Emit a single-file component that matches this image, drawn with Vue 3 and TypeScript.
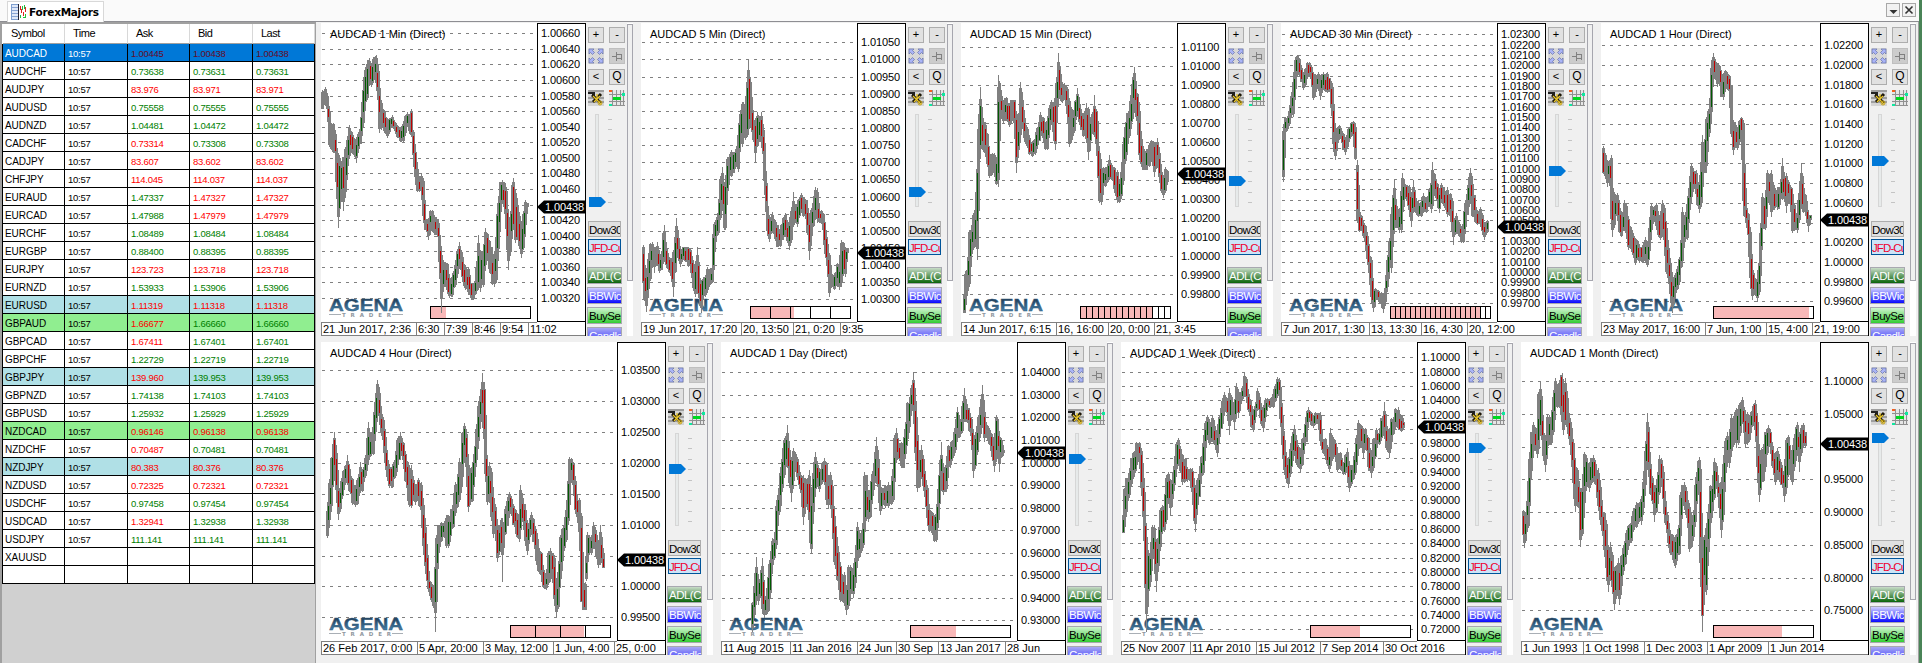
<script setup lang="ts">
interface Quote {
  symbol: string
  time: string
  prices: string[]
  // one letter per price: r = down, g = up
  dir: string
  mark?: string
}
interface Chart {
  title: string
  wide?: boolean
  last?: boolean
  // first price, step, count, y of the first and of the last label
  scale: [number, number, number, number, number]
  tag: number
  times: [number, string][]
  level: number
  session: { width: number, fill: number, cell?: number }
  // x, high, low
  track: number[]
}

function q(symbol: string, ask: string, bid: string, last: string, dir: string, mark = ''): Quote {
  return { symbol, time: ask ? '10:57' : '', prices: [ask, bid, last], dir, mark }
}

const quotes: Quote[] = [
  q('AUDCAD', '1.00445', '1.00438', '1.00438', 'rrr', 'selected'),
  q('AUDCHF', '0.73638', '0.73631', '0.73631', 'ggg'),
  q('AUDJPY', '83.976', '83.971', '83.971', 'rrr'),
  q('AUDUSD', '0.75558', '0.75555', '0.75555', 'ggg'),
  q('AUDNZD', '1.04481', '1.04472', '1.04472', 'ggg'),
  q('CADCHF', '0.73314', '0.73308', '0.73308', 'rgg'),
  q('CADJPY', '83.607', '83.602', '83.602', 'rrr'),
  q('CHFJPY', '114.045', '114.037', '114.037', 'rrr'),
  q('EURAUD', '1.47337', '1.47327', '1.47327', 'grr'),
  q('EURCAD', '1.47988', '1.47979', '1.47979', 'grr'),
  q('EURCHF', '1.08489', '1.08484', '1.08484', 'ggg'),
  q('EURGBP', '0.88400', '0.88395', '0.88395', 'ggg'),
  q('EURJPY', '123.723', '123.718', '123.718', 'rrr'),
  q('EURNZD', '1.53933', '1.53906', '1.53906', 'ggg'),
  q('EURUSD', '1.11319', '1.11318', '1.11318', 'rrr', 'blue'),
  q('GBPAUD', '1.66677', '1.66660', '1.66660', 'rgg', 'green'),
  q('GBPCAD', '1.67411', '1.67401', '1.67401', 'rgg'),
  q('GBPCHF', '1.22729', '1.22719', '1.22719', 'ggg'),
  q('GBPJPY', '139.960', '139.953', '139.953', 'rgg', 'blue'),
  q('GBPNZD', '1.74138', '1.74103', '1.74103', 'ggg'),
  q('GBPUSD', '1.25932', '1.25929', '1.25929', 'ggg'),
  q('NZDCAD', '0.96146', '0.96138', '0.96138', 'rrr', 'green'),
  q('NZDCHF', '0.70487', '0.70481', '0.70481', 'rgg'),
  q('NZDJPY', '80.383', '80.376', '80.376', 'rrr', 'blue'),
  q('NZDUSD', '0.72325', '0.72321', '0.72321', 'rrr'),
  q('USDCHF', '0.97458', '0.97454', '0.97454', 'ggg'),
  q('USDCAD', '1.32941', '1.32938', '1.32938', 'rgg'),
  q('USDJPY', '111.141', '111.141', '111.141', 'ggg'),
  q('XAUUSD', '', '', '', ''),
  q('', '', '', '', ''),
]

// coordinates are kept in thirds of a pixel
const top: Chart[] = [
  {
    title: 'AUDCAD 1 Min (Direct)', scale: [1.0066, 0.0002, 18, 31, 825], tag: 552, level: 8,
    times: [[0, '21 Jun 2017, 2:36'], [286, '6:30'], [370, '7:39'], [454, '8:46'], [538, '9:54'], [622, '11:02']],
    session: { width: 100, fill: 15 },
    track: [37,270,328,46,260,305,52,285,330,58,330,440,62,370,450,68,370,460,74,400,465,78,440,560,83,460,685,90,480,620,96,470,570,100,470,632,106,440,590,112,420,505,118,375,470,124,395,460,130,410,465,138,420,490,145,395,450,152,350,410,160,255,380,166,200,315,172,180,300,178,175,250,184,200,260,190,170,250,197,165,250,203,210,300,208,280,400,215,325,380,222,330,400,230,355,415,238,355,400,246,345,375,254,365,395,262,375,415,270,380,425,278,370,425,284,345,400,290,335,375,297,350,400,304,328,410,308,390,470,314,450,540,320,500,575,326,540,575,332,520,570,338,535,655,346,655,690,354,655,720,360,630,690,366,630,695,372,645,705,378,650,705,384,670,715,388,700,790,393,760,940,398,780,870,404,785,860,410,790,880,418,830,895,426,825,890,434,790,860,440,750,825,446,725,800,454,750,820,460,790,850,466,795,870,474,800,885,482,850,900,490,850,900,498,800,880,504,705,860,510,750,875,518,750,860,524,685,800,530,700,770,538,720,820,546,760,855,553,780,862,558,700,850,564,590,750,570,545,640,576,540,600,582,545,630,588,560,690,594,650,810,600,650,760,606,550,700,610,535,690,616,570,730,622,610,720,628,640,740,634,670,775,640,640,750,646,600,680,652,610,620],
  },
  {
    title: 'AUDCAD 5 Min (Direct)', scale: [1.0105, 0.0005, 16, 58, 829], tag: 690, level: 7,
    times: [[0, '19 Jun 2017, 17:20'], [301, '20, 13:50'], [457, '21, 0:20'], [596, '9:35']],
    session: { width: 100, fill: 43, cell: 20 },
    track: [38,735,850,42,790,900,48,820,935,54,770,875,60,730,840,66,725,790,72,750,820,80,725,790,86,765,820,92,760,810,98,700,790,102,675,780,108,740,800,116,770,820,124,775,830,130,750,890,137,655,775,143,705,780,150,750,800,158,740,780,166,740,785,174,740,800,180,745,800,186,770,840,194,790,890,200,740,870,206,830,900,212,850,940,218,830,890,226,830,890,232,800,880,240,805,855,246,800,850,250,690,820,256,660,730,264,630,700,270,530,660,275,500,620,281,590,690,286,550,690,291,470,580,297,470,530,303,450,530,310,460,520,318,440,500,325,400,515,330,330,440,336,305,440,344,305,420,350,230,410,355,180,400,360,240,380,366,325,400,374,370,490,380,335,440,386,350,420,392,335,430,398,380,470,403,455,550,408,540,640,412,610,700,418,650,725,426,635,690,434,660,720,442,675,740,450,690,740,458,650,720,464,640,700,470,660,730,478,670,750,484,620,730,488,575,680,494,620,670,500,605,680,508,590,650,514,580,640,520,590,650,528,600,660,536,640,780,542,630,710,548,600,680,555,560,660,560,565,670,566,630,670,574,630,670,580,640,690,586,680,770,592,730,800,598,760,890,604,820,860,612,825,870,620,790,860,628,790,870,634,720,860,640,725,820,646,740,830,652,745,760],
  },
  {
    title: 'AUDCAD 15 Min (Direct)', scale: [1.011, 0.001, 14, 73, 814], tag: 452, level: 6,
    times: [[0, '14 Jun 2017, 6:15'], [286, '16, 16:00'], [442, '20, 0:00'], [580, '21, 3:45']],
    session: { width: 90, fill: 72, cell: 6 },
    track: [41,880,940,46,820,900,52,800,880,58,690,860,64,690,770,70,640,750,75,620,740,80,480,780,85,380,500,91,262,460,97,350,450,104,370,470,110,400,500,118,460,535,126,460,520,132,460,520,139,470,555,143,225,560,148,250,345,154,285,350,160,300,370,168,290,360,176,310,380,184,300,370,191,300,370,198,340,520,204,370,460,211,245,410,217,300,380,222,350,420,230,380,440,238,410,465,246,430,470,254,410,465,262,380,440,270,335,410,278,350,420,284,370,450,292,350,450,298,320,400,304,300,370,311,310,430,316,290,450,321,220,330,325,160,280,331,220,300,337,245,310,343,250,300,350,260,350,358,300,440,365,330,410,372,330,400,380,265,350,386,310,370,394,340,390,400,340,410,408,310,420,414,320,480,420,360,430,426,340,400,433,285,410,440,360,470,446,440,610,452,500,615,458,500,560,466,500,560,472,500,550,478,465,540,484,490,540,492,500,570,500,510,610,506,540,610,512,510,590,518,430,550,524,370,490,532,340,440,540,300,390,546,250,360,551,200,330,556,250,350,562,280,370,568,330,480,574,410,500,580,445,510,588,450,510,596,430,500,604,420,480,612,425,530,620,415,490,628,450,530,634,510,580,640,540,595,646,500,580,652,510,550],
  },
  {
    title: 'AUDCAD 30 Min (Direct)', scale: [1.023, 0.001, 27, 34, 840], tag: 612, level: 5,
    times: [[0, '7 Jun 2017, 1:30'], [265, '13, 13:30'], [421, '16, 4:30'], [559, '20, 12:00']],
    session: { width: 100, fill: 90, cell: 5 },
    track: [40,380,545,46,350,400,52,350,390,58,330,375,64,290,350,70,240,350,75,170,280,80,165,210,86,175,230,92,200,245,98,220,270,104,205,260,110,185,225,118,185,230,124,200,240,130,220,300,136,225,280,144,215,260,150,225,300,158,215,270,166,225,275,172,215,280,180,240,275,186,250,360,190,300,450,195,400,480,200,380,430,206,375,410,214,390,420,220,400,450,226,410,465,234,385,430,242,365,410,250,362,410,256,370,480,260,480,670,266,635,695,272,645,690,278,665,710,286,675,730,292,700,780,298,765,825,304,770,900,309,870,935,316,865,900,324,870,900,332,875,915,339,890,940,346,860,910,352,770,870,358,720,810,363,640,820,368,570,720,372,540,700,378,610,680,386,640,700,394,570,700,397,520,650,403,550,600,410,555,610,418,555,640,424,590,680,430,540,625,436,590,640,444,610,650,452,600,650,460,580,640,468,600,640,476,565,620,482,550,640,487,485,610,494,530,580,500,550,610,508,570,640,514,550,610,522,570,620,530,560,650,540,580,650,546,600,700,550,660,735,558,640,690,566,665,710,574,680,730,580,670,730,586,600,690,594,545,630,601,505,600,607,550,650,614,620,670,622,630,675,630,620,670,636,640,700,642,670,720,650,660,700],
  },
  {
    title: 'AUDCAD 1 Hour (Direct)', last: true, scale: [1.022, 0.002, 14, 67, 835], tag: 591, level: 4,
    times: [[0, '23 May 2017, 16:00'], [313, '7 Jun, 1:00'], [496, '15, 4:00'], [634, '21, 19:00']],
    session: { width: 100, fill: 95 },
    track: [38,438,520,44,460,530,50,490,560,58,480,540,64,465,680,67,560,710,74,590,650,80,580,640,88,620,700,94,640,710,102,600,680,108,610,710,114,650,750,122,680,750,128,700,770,134,715,795,140,720,770,148,740,790,156,740,790,164,710,790,170,740,800,176,680,760,182,610,700,190,620,660,197,610,680,204,640,710,210,650,720,216,600,710,222,620,730,228,670,820,234,740,840,240,780,890,246,820,940,252,840,900,260,800,870,268,770,850,276,620,800,280,640,760,286,650,720,292,600,720,298,560,640,304,490,600,310,510,560,318,510,590,326,540,640,332,470,620,337,405,540,342,450,520,348,350,520,354,330,420,360,290,380,364,190,350,370,160,230,376,185,240,382,190,260,388,195,250,394,220,290,398,220,300,404,210,270,412,215,270,418,225,280,424,255,410,428,360,465,434,370,440,442,380,450,448,360,430,454,352,400,460,360,620,463,480,650,468,620,670,474,640,710,480,680,850,485,800,900,492,830,880,500,830,905,506,780,880,511,690,810,517,580,700,524,600,690,530,510,620,536,525,590,544,510,650,552,560,630,560,560,630,568,560,620,576,475,600,582,540,600,588,520,640,594,540,600,602,560,640,607,590,700,614,640,690,622,640,700,628,570,660,634,490,620,640,560,640,648,600,650,654,640,695,660,645,660],
  },
]

const bottom: Chart[] = [
  {
    title: 'AUDCAD 4 Hour (Direct)', wide: true, scale: [1.035, 0.005, 9, 85, 826], tag: 654, level: 3,
    times: [[0, '26 Feb 2017, 0:00'], [289, '5 Apr, 20:00'], [487, '3 May, 12:00'], [697, '1 Jun, 4:00'], [880, '25, 0:00']],
    session: { width: 100, fill: 73, cell: 25 },
    track: [52,520,610,58,440,560,63,370,520,68,320,440,73,290,430,78,350,480,84,460,555,90,450,530,96,420,490,104,390,450,110,360,450,118,400,470,126,430,510,134,450,515,142,430,510,150,380,470,156,410,470,164,370,430,170,310,400,175,260,370,180,310,365,188,270,360,194,190,300,200,135,240,206,170,250,212,230,290,218,250,320,224,300,390,230,370,430,238,390,460,246,390,460,254,370,430,262,310,400,270,290,350,278,320,380,286,350,440,294,380,510,302,390,520,308,430,490,316,450,510,324,430,500,332,440,530,338,500,640,344,570,700,350,650,750,356,735,770,364,740,800,370,750,820,374,690,890,379,600,740,384,570,660,392,560,620,400,565,600,408,540,640,414,540,640,420,550,610,428,500,580,434,440,540,440,450,520,446,370,500,452,380,460,456,290,440,462,265,370,468,290,400,474,380,530,480,400,510,486,390,500,492,350,430,498,280,380,504,210,320,510,170,270,516,115,230,521,140,330,526,310,430,532,400,510,538,380,490,544,400,550,550,480,610,556,510,590,562,570,680,568,570,660,574,550,640,577,550,740,580,560,640,584,520,600,590,490,570,596,470,540,602,490,540,610,510,570,618,530,600,626,530,620,631,450,580,637,490,560,644,520,630,650,560,660,658,560,610,664,530,600,670,550,620,678,590,690,684,640,710,692,650,730,700,700,760,708,720,765,714,650,750,720,640,740,726,655,720,732,660,810,737,770,850,743,700,820,750,600,740,756,580,680,762,560,640,768,520,620,773,430,560,778,365,480,784,370,420,790,385,450,796,430,530,802,490,550,808,490,600,814,540,800,819,740,825,824,740,825,830,590,690,836,600,650,842,610,660,850,560,640,857,600,670,863,620,700,869,570,690,875,640,680,880,660,700],
  },
  {
    title: 'AUDCAD 1 Day (Direct)', wide: true, scale: [1.04, 0.01, 12, 91, 835], tag: 332, level: 2,
    times: [[0, '11 Aug 2015'], [208, '11 Jan 2016'], [409, '24 Jun'], [526, '30 Sep'], [652, '13 Jan 2017'], [853, '28 Jun']],
    session: { width: 100, fill: 45 },
    track: [127,800,890,131,740,850,137,665,800,143,730,810,150,730,790,155,670,830,161,780,850,168,780,840,174,720,830,180,660,780,186,610,700,192,610,670,198,510,640,204,470,550,210,410,520,216,360,460,221,310,420,226,330,400,232,270,380,237,340,450,243,380,500,249,340,440,254,350,400,260,370,430,266,410,450,272,420,480,278,420,570,284,430,510,290,430,520,296,405,560,300,460,640,304,500,655,309,400,540,315,350,470,321,380,450,328,400,470,336,380,440,342,370,430,348,380,510,354,430,520,361,410,510,367,450,560,373,530,690,379,600,710,385,640,750,391,690,800,397,720,800,403,710,810,408,770,840,414,690,820,420,690,770,428,690,790,434,660,750,440,560,680,446,590,670,452,590,650,458,560,640,462,410,600,467,420,550,473,480,560,479,460,550,485,410,490,491,380,450,498,305,440,504,370,460,510,450,540,518,460,510,526,450,520,534,440,520,542,450,510,548,390,500,553,300,420,558,280,380,564,320,370,572,320,400,580,340,400,586,270,370,592,200,320,598,200,280,604,155,230,610,112,220,615,190,360,620,300,470,626,360,460,632,330,430,638,370,460,645,430,490,652,450,560,658,520,590,665,530,600,672,540,620,679,530,620,684,460,560,690,370,480,694,320,440,700,400,480,708,380,470,714,330,400,720,330,400,728,310,370,734,270,350,742,215,310,748,260,310,756,210,290,763,160,240,769,200,260,776,230,290,784,250,310,790,300,430,796,290,400,803,240,330,810,210,300,816,150,270,822,230,320,830,270,310,838,280,330,846,300,370,853,330,410,858,240,380,862,245,340,868,300,410,874,310,370,880,345,355],
  },
  {
    title: 'AUDCAD 1 Week (Direct)', wide: true, scale: [1.1, 0.02, 20, 46, 862], tag: 254, level: 1,
    times: [[0, '25 Nov 2007'], [208, '11 Apr 2010'], [406, '15 Jul 2012'], [598, '7 Sep 2014'], [786, '30 Oct 2016']],
    session: { width: 100, fill: 49 },
    track: [38,540,595,43,460,570,49,430,530,56,410,480,63,370,450,70,350,430,78,320,400,86,320,370,92,340,460,98,430,550,103,500,620,108,580,890,114,650,780,120,650,750,126,570,680,131,570,670,137,620,770,143,600,700,149,520,640,156,510,590,163,510,590,168,420,560,173,410,490,179,440,540,186,430,500,192,390,450,199,320,410,205,310,390,211,340,410,217,360,450,224,370,440,232,400,440,240,400,440,247,400,480,252,440,560,256,480,590,262,430,520,270,390,450,278,320,420,284,260,340,291,240,310,298,260,330,305,240,320,312,270,330,322,280,365,328,240,310,335,190,270,342,170,230,350,190,240,357,160,300,364,180,240,371,210,285,377,145,230,384,180,250,391,170,210,398,150,190,403,115,170,409,130,190,415,170,230,422,210,280,428,230,290,434,210,250,442,160,210,447,180,230,453,210,270,460,230,290,466,190,250,472,190,220,480,190,220,488,175,220,494,150,200,500,125,190,506,130,180,511,160,260,517,240,340,523,310,410,529,360,440,534,370,460,540,340,420,546,300,380,552,270,350,558,310,390,564,330,400,570,350,410,576,310,390,582,290,340,588,240,320,594,215,260,602,230,270,608,240,280,616,230,270,624,235,270,630,230,320,636,310,350,644,310,370,650,330,390,656,350,410,661,280,400,668,310,360,676,320,370,682,350,410,690,350,400,698,380,420,706,360,420,712,340,410,718,380,470,724,390,450,732,360,430,739,310,400,745,255,350,752,270,330,760,280,370,766,280,340,774,310,400,782,360,430,790,310,400,798,280,340,806,290,330,814,250,310,822,200,300,828,270,340,836,290,370,842,250,320,848,250,300,856,220,280,864,215,285,872,240,290,878,260,280],
  },
  {
    title: 'AUDCAD 1 Month (Direct)', wide: true, last: true, scale: [1.1, 0.05, 8, 118, 805], tag: 306, level: 0,
    times: [[0, '1 Jun 1993'], [187, '1 Oct 1998'], [370, '1 Dec 2003'], [559, '1 Apr 2009'], [742, '1 Jun 2014']],
    session: { width: 100, fill: 68 },
    track: [38,525,600,42,560,640,48,530,600,53,430,580,58,370,480,63,290,410,68,260,350,74,280,340,80,280,370,85,170,330,89,140,290,94,180,310,100,290,370,106,310,410,112,240,340,118,240,330,124,260,330,130,180,300,136,130,210,142,150,220,149,130,220,155,115,270,160,160,300,166,130,270,171,180,280,178,240,320,184,280,370,189,320,460,194,380,530,200,400,500,205,450,520,209,460,635,216,440,600,222,350,520,228,360,450,236,380,470,243,370,450,250,360,440,256,380,450,263,400,520,270,450,560,275,530,590,281,530,650,287,560,710,293,650,770,299,620,720,305,650,760,311,700,825,317,690,790,323,670,760,328,690,810,334,660,760,340,630,720,347,590,670,355,570,640,362,560,620,370,520,590,378,500,580,386,500,560,394,490,570,400,440,520,405,340,460,410,235,390,415,300,400,421,380,480,428,440,510,433,460,560,440,430,510,446,360,480,453,370,440,459,410,500,466,490,570,474,560,630,481,590,660,488,600,680,494,600,700,500,590,670,506,560,660,511,470,590,517,450,520,523,440,510,529,460,550,536,510,650,542,560,640,548,530,610,554,450,570,560,400,490,566,365,440,570,400,700,575,600,890,581,600,770,587,570,780,593,520,650,599,450,580,605,450,530,611,370,490,617,390,450,624,440,490,629,440,560,634,450,610,640,380,550,645,310,420,651,290,370,658,300,400,664,240,350,671,230,330,677,220,340,683,210,330,689,200,300,695,185,250,701,220,300,706,240,340,712,230,330,718,240,320,724,230,280,730,210,270,736,195,290,741,250,400,746,370,500,752,340,450,759,340,440,766,290,400,773,270,330,780,290,340,787,330,400,794,350,450,800,340,430,807,370,440,814,390,450,822,410,500,828,310,460,834,300,380,840,340,430,846,360,450,852,300,400,858,270,370,862,260,340,868,300,410,874,270,360,880,265,330,884,290,340],
  },
]

function noise(n: number) {
  const v = Math.sin(n * 12.9898) * 43758.5453
  return v - Math.floor(v)
}

// every known bar is kept, gaps wider than two pixels get one more in between
function fillGaps(track: number[]) {
  const result: number[][] = []
  for (let i = 0; i < track.length; i += 3) {
    const cur = track.slice(i, i + 3)
    const prev = result[result.length - 1]
    if (prev && cur[0] - prev[0] > 4) {
      const k = 0.35 + 0.3 * noise(cur[0])
      const pad = (cur[2] - cur[1]) * 0.12
      result.push([
        (prev[0] + cur[0]) / 2,
        prev[1] + (cur[1] - prev[1]) * k + pad * noise(i),
        prev[2] + (cur[2] - prev[2]) * k - pad * noise(i + 1),
      ])
    }
    result.push(cur)
  }
  return result
}

function bars(c: Chart) {
  const oy = c.wide ? 21 : 69
  let grey = '', up = '', down = ''
  const list = fillGaps(c.track)
  let lastColored = -9
  list.forEach(([x, a, b], i) => {
    const next = list[i + 1] || list[i]
    const prev = list[i - 1] || list[i]
    const px = Math.round((x - 33) / 3)
    const y1 = Math.round((a - oy) / 3)
    const y2 = Math.max(y1 + 1, Math.round((b - oy) / 3))
    const size = y2 - y1
    // a long spike beyond both neighbours is only a wick
    const over = Math.max(0, Math.min(prev[1], next[1]) - a) / 3
    const under = Math.max(0, b - Math.max(prev[2], next[2])) / 3
    const b1 = Math.round(y1 + Math.min(size * 0.4, Math.max(over * 0.75, size * 0.12 * noise(x))))
    const b2 = Math.round(y2 - Math.min(size * 0.65, Math.max(under * 0.8, size * 0.12 * noise(x * 2))))
    grey += `M${px} ${y1}h1V${y2}h-1z`
    grey += `M${px - 1} ${b1}h3V${b2}h-3z`
    const move = next[1] + next[2] - prev[1] - prev[2]
    const chance = Math.abs(move) > 60 ? 0.85 : 0.5
    if (b2 - b1 > 4 && px - lastColored > 1 && noise(x * 3) < chance) {
      const c1 = b1 + 1 + Math.floor((b2 - b1) * 0.3 * noise(x * 5))
      const c2 = b2 - 1 - Math.floor((b2 - b1) * 0.35 * noise(x * 7))
      const d = `M${px} ${c1}h1V${c2}h-1z`
      if (move < 0) up += d
      else down += d
      lastColored = px
    }
  })
  return { grey, up, down }
}

function build(c: Chart) {
  const w = (c.wide ? 296 : 216) + (c.last ? 3 : 0)
  const [from, step, count, y0, y1] = c.scale
  const tagY = Math.round(c.tag / 3)
  const levels = []
  for (let i = 0; i < count; i++) {
    levels.push({
      y: Math.round((y0 + (y1 - y0) * i / (count - 1)) / 3),
      text: (from - step * i).toFixed(5),
    })
  }
  const cells = []
  if (c.session.cell) {
    for (let x = c.session.cell; x < c.session.width; x += c.session.cell) cells.push(x)
  }
  const times = c.times.map(t => ({ x: Math.round(t[0] / 3), text: t[1] }))
  // the price tag replaces the label it would sit on
  const labels = levels.filter(l => Math.abs(l.y - tagY) > 4)
  return { ...c, w, levels, labels, cells, times, tagY, bars: bars(c) }
}

const rows = [top.map(build), bottom.map(build)]
const ticks = [96, 106, 117, 127, 138, 148, 158, 169, 179]
const studies = [
  { text: 'ADL(C', cls: 'adl' },
  { text: 'BBWic', cls: 'bbw' },
  { text: 'BuySe', cls: 'buy' },
  { text: 'Candle', cls: 'candle' },
]
</script>

<template>
  <div class="window">
    <header class="tabs">
      <div class="tab">
        <svg width="16" height="16" shape-rendering="crispEdges">
          <rect width="16" height="16" fill="#7f9fd0" />
          <rect x="1" y="1" width="6" height="14" fill="#dfe8f8" />
          <path d="M1 3.500h6M1 6.500h6M1 9.500h6M1 12.500h6" stroke="#88a4d4" />
          <rect x="8" y="0" width="8" height="16" fill="#fff" />
          <path d="M7.500 0V16" stroke="#223" />
          <path d="M9.500 2v4M10.500 5v4M12.500 8v4M14.500 3v5" stroke="#e02020" />
          <path d="M9.500 11v3M11.500 2v4M13.500 1v4M14.500 10v4M11.500 13h2" stroke="#20c040" />
        </svg>
        <span>ForexMajors</span>
      </div>
      <div class="tab-actions">
        <svg width="14" height="14" class="action"><path d="M2.500 6h8l-4 4z" fill="#333" /></svg>
        <svg width="14" height="14" class="action"><path d="M2.500 2.500l7 7M9.500 2.500l-7 7" stroke="#333" stroke-width="1.600" /></svg>
      </div>
    </header>
    <main class="content">
      <aside class="quotes">
        <div class="row head">
          <span>Symbol</span><span>Time</span><span>Ask</span><span>Bid</span><span>Last</span>
        </div>
        <div v-for="(item, i) in quotes" :key="i" class="row" :class="item.mark">
          <span class="symbol">{{ item.symbol }}</span>
          <span>{{ item.time }}</span>
          <span v-for="(p, k) in item.prices" :key="k" :class="item.dir[k] === 'r' ? 'down' : 'up'">{{ p }}</span>
        </div>
      </aside>
      <section class="charts">
        <div v-for="(row, r) in rows" :key="r" class="chart-row">
          <article v-for="c in row" :key="c.title" class="panel">
            <svg class="plot" :width="c.w + 49" height="313" shape-rendering="crispEdges">
              <defs>
                <linearGradient id="steel" x1="0" y1="0" x2="0" y2="1">
                  <stop offset="0.2" stop-color="#24425e" />
                  <stop offset="0.8" stop-color="#4580aa" />
                </linearGradient>
              </defs>
              <rect :width="c.w + 49" height="313" fill="#fff" />
              <path
                v-for="l in c.levels" :key="l.text" :d="`M1 ${l.y + 0.5}H${c.w - 4}`"
                stroke="#808080" stroke-dasharray="3 5"
              />
              <text x="9" y="15">{{ c.title }}</text>
              <g>
                <text x="8" y="288" class="brand" textLength="74" lengthAdjust="spacingAndGlyphs">AGENA</text>
                <path d="M8 291.500h12M71 291.500h11" stroke="#a9afb5" />
                <text x="21" y="294" class="sub" textLength="49">TRADER</text>
              </g>
              <g :transform="`translate(${c.w - 6 - c.session.width} 283)`">
                <rect :width="c.session.width" height="12" fill="#fff" />
                <rect y="1" :width="c.session.fill" height="11" fill="#f8b8b8" />
                <path v-for="x in c.cells" :key="x" :d="`M${x - 0.5} 0V12`" stroke="#000" />
                <rect x="-0.500" y="0.500" :width="c.session.width" height="12" fill="none" stroke="#000" />
              </g>
              <path :d="c.bars.grey" fill="#808080" />
              <path :d="c.bars.up" fill="#005a00" />
              <path :d="c.bars.down" fill="#c00000" />

              <rect :x="c.w + 0.5" y="0.500" width="48" height="298" fill="#fff" stroke="#000" />
              <text v-for="l in c.labels" :key="l.text" :x="c.w + 4" :y="l.y + 4" class="price">{{ l.text }}</text>
              <path
                :d="`M${c.w} ${c.tagY}l7 -6.500h42v13h-42z`"
                fill="#000" shape-rendering="auto"
              />
              <text :x="c.w + 8" :y="c.tagY + 4" class="price tag">1.00438</text>

              <path :d="`M0.500 299V312.500H${c.w + 49}M0 299.500H${c.w}`" fill="none" stroke="#808080" />
              <path :d="`M${c.w + 48.5} 299V313`" stroke="#000" />
              <g v-for="t in c.times" :key="t.text">
                <path :d="`M${t.x + 0.5} 299V312`" stroke="#808080" />
                <text :x="t.x + 2" y="310">{{ t.text }}</text>
              </g>
            </svg>
            <div class="tools">
              <div class="grid">
                <span class="btn">+</span>
                <span class="btn">-</span>
                <svg class="btn flat" width="16" height="16">
                  <rect width="16" height="16" fill="#d8d8d8" />
                  <path d="M1 1h5l-1.500 1.500 2 2-2 2-2-2L1 6zM15 1h-5l1.500 1.500-2 2 2 2 2-2L15 6zM1 15h5l-1.500-1.500 2-2-2-2-2 2L1 10zM15 15h-5l1.500-1.500-2-2 2-2 2 2L15 10z" fill="#aab4f6" stroke="#6670a8" stroke-width=".7" />
                </svg>
                <svg class="btn off" width="16" height="16" shape-rendering="crispEdges">
                  <path d="M2 7.500h5M6.500 3v9M7 5.500h4v4h-4M11.500 5v6" fill="none" stroke="#808080" />
                </svg>
                <span class="btn">&lt;</span>
                <span class="btn big">Q</span>
                <svg class="btn flat" width="16" height="16">
                  <rect width="16" height="16" fill="#d4d4d4" />
                  <path d="M0 1h16M0 8h16M0 12h16" stroke="#8c8c8c" stroke-width="1.500" />
                  <path d="M0 2h7v4h-3v-2h-4z" fill="#222" />
                  <path d="M4 5l9 8M13 4l-8 8" stroke="#1c1608" stroke-width="3" />
                  <path d="M5 6l8 8M9 4v6M6 12l6-6" stroke="#e8c628" stroke-width="1.300" />
                  <circle cx="12" cy="13" r="2" fill="none" stroke="#c8a418" />
                </svg>
                <svg class="btn flat" width="16" height="16" shape-rendering="crispEdges">
                  <rect width="16" height="16" fill="#e6e6e6" />
                  <path d="M3.500 0V16M7.500 0V16M11.500 0V16M14.500 0V16M0 4.500H16M0 11.500H16M0 15.500H16" stroke="#909090" />
                  <rect x="4" y="7" width="8" height="3" fill="#00d820" />
                  <rect width="3" height="2" fill="#f46020" />
                  <rect x="13" y="3" width="3" height="3" fill="#10e8a0" />
                  <rect y="14" width="3" height="2" fill="#10e8a0" />
                </svg>
              </div>
              <svg class="slider" width="36" height="115" shape-rendering="crispEdges">
                <rect x="9.500" y="8.500" width="3" height="92" fill="#e7eaea" stroke="#d6d6d6" />
                <path v-for="t in ticks" :key="t" :d="`M22 ${t - 82.5}h4`" stroke="#c4c4c4" />
                <path :d="`M3 ${ticks[c.level] - 88}h12l5 5l-5 5h-12z`" fill="#0078d7" shape-rendering="auto" />
              </svg>
              <div class="quick">Dow30</div>
              <div class="quick jfd">JFD-Cu</div>
              <div class="studies">
                <div v-for="s in studies" :key="s.cls" class="study" :class="s.cls">{{ s.text }}</div>
              </div>
            </div>
            <div class="scroll"><div class="thumb"></div></div>
          </article>
        </div>
      </section>
    </main>
  </div>
</template>

<style>
body {
  margin: 0;
  background: #f0f0f0;
}
</style>

<style scoped>
.window {
  width: 1922px;
  height: 663px;
  overflow: hidden;
  background: linear-gradient(90deg, #f0f0f0 1918px, #a0a0a0 1918px 1919px, #4a8457 1919px);
  font: 11px "Liberation Sans", Arial, sans-serif;
  color: #000;
}

.tabs {
  box-sizing: border-box;
  display: flex;
  justify-content: space-between;
  width: 1919px;
  height: 22px;
  padding: 1px 3px 0 7px;
  background: #fafafa;
  border-bottom: 1px solid #8e8e93;
}

.tab {
  box-sizing: border-box;
  display: flex;
  align-items: center;
  gap: 2px;
  width: 97px;
  height: 21px;
  padding-left: 3px;
  background: #fff;
  border: 1px solid #d8d8d8;
  border-bottom: 0;
  font: bold 10.5px "DejaVu Sans", sans-serif;
  letter-spacing: -0.28px;
}

.tab-actions {
  display: flex;
  gap: 2px;
  padding-top: 2px;
}

.action {
  box-sizing: border-box;
  border: 1px solid #a8a8a8;
  background: #f2f2f2;
}

.content {
  display: flex;
  height: 641px;
}

.quotes {
  box-sizing: border-box;
  width: 316px;
  margin-right: 5px;
  border: solid #a0a0a0;
  border-width: 2px 1px 0 2px;
  background: #d0d0d0;
}

.row {
  box-sizing: border-box;
  display: grid;
  grid-template-columns: 62px 63px 62px 63px 62px;
  width: 313px;
  height: 18px;
  border-left: 1px solid #000;
  background: #fff;
}

.row span {
  box-sizing: border-box;
  padding-left: 3px;
  overflow: hidden;
  border-right: 1px solid #000;
  border-bottom: 1px solid #000;
  font-size: 9.5px;
  line-height: 19px;
  letter-spacing: -0.27px;
  white-space: nowrap;
}

.row .symbol {
  padding-left: 2px;
  font-size: 10px;
  letter-spacing: -0.05px;
}

.row.head {
  height: 20px;
  border-left-color: #fff;
}

.row.head span {
  padding-left: 8px;
  border-right-color: #d8d8d8;
  border-bottom-color: #a0a0a0;
  font-size: 11px;
  letter-spacing: -0.5px;
}

.up {
  color: #008000;
}

.down {
  color: #f00;
}

.row.blue {
  background: #b0e0e6;
}

.row.green {
  background: #90ee90;
}

.row.selected {
  background: #0078d7;
  color: #fff;
}

.selected .down {
  color: #640a28;
}

.charts {
  display: flex;
  flex-direction: column;
  gap: 6px;
  width: 1598px;
  padding-top: 1px;
}

.chart-row {
  display: flex;
  gap: 8px;
  height: 313px;
}

.panel {
  display: flex;
  height: 313px;
}

.plot {
  display: block;
  flex: none;
}

.plot text {
  font-size: 11px;
}

.plot .price {
  letter-spacing: -0.1px;
}

.plot .tag {
  fill: #fff;
}

.plot .brand {
  font-size: 17px;
  font-weight: bold;
  fill: url(#steel);
  stroke: #2f5878;
  stroke-width: 0.4px;
}

.plot .sub {
  font-size: 5.5px;
  font-weight: bold;
  font-family: "DejaVu Sans", sans-serif;
  fill: #8f979e;
}

.tools {
  box-sizing: border-box;
  width: 41px;
  height: 313px;
  padding: 4px 0 0 2px;
  overflow: hidden;
}

.grid {
  display: grid;
  grid-template-columns: 16px 16px;
  gap: 5px;
}

.btn {
  box-sizing: border-box;
  height: 16px;
  border: 1px solid #adadad;
  background: #e1e1e1;
  line-height: 13px;
  text-align: center;
}

.btn.big {
  font-size: 12px;
}

.btn.flat {
  border: 0;
}

.btn.off {
  border-color: #bfbfbf;
  background: #ccc;
}

.slider {
  display: block;
  margin-left: -2px;
}

.quick {
  box-sizing: border-box;
  width: 33px;
  height: 16px;
  margin-bottom: 2px;
  overflow: hidden;
  border: 1px solid #adadad;
  background: #e1e1e1;
  font-size: 11.5px;
  line-height: 16px;
  letter-spacing: -0.6px;
  white-space: nowrap;
}

.quick.jfd {
  border-color: #005499;
  background: #cce4f7;
  color: #f00030;
  letter-spacing: -0.9px;
}

.studies {
  display: flex;
  flex-direction: column;
  gap: 3px;
  margin: 12px 0 0 -1px;
}

.study {
  box-sizing: border-box;
  flex: none;
  width: 35px;
  height: 17px;
  padding-left: 1px;
  overflow: hidden;
  border: 1px solid #a8a8b0;
  color: #fff;
  font-size: 11.5px;
  line-height: 17px;
  letter-spacing: -0.5px;
  white-space: nowrap;
}

.adl {
  background: linear-gradient(#c8dcc8, #0a640a);
}

.bbw {
  background: linear-gradient(#d0d0ff, #0a0aff);
}

.buy {
  background: linear-gradient(#d0f4d0, #32cd32);
  color: #000;
}

.candle {
  background: linear-gradient(#a8a8f4, #3030ff);
}

.scroll {
  width: 6px;
  padding-top: 1px;
  background: #fff;
}

.thumb {
  box-sizing: border-box;
  height: 257px;
  border: 1px solid #a6a6ae;
  background: #f0f0f0;
}
</style>
